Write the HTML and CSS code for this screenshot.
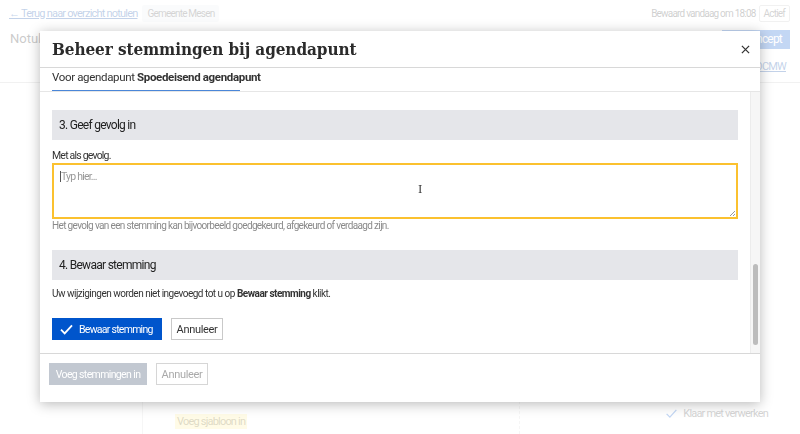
FILE: index.html
```html
<!DOCTYPE html>
<html lang="nl">
<head>
<meta charset="utf-8">
<title>Beheer stemmingen</title>
<link rel="stylesheet" href="styles.css">
</head>
<body>
<div class="page">
  <header class="topbar">
    <div class="topbar-left">
      <a class="back-link" href="#">← Terug naar overzicht notulen</a>
      <span class="pill">Gemeente Mesen</span>
    </div>
    <div class="topbar-right">
      <span class="saved">Bewaard vandaag om 18:08</span>
      <span class="pill pill-outline">Actief</span>
    </div>
  </header>
  <div class="titlebar">
    <span class="doc-title">Notulen</span>
    <span class="btn-concept">Concept</span>
  </div>
  <div class="subbar">
    <a class="ocmw-link" href="#">OCMW</a>
  </div>
  <div class="workspace">
    <aside class="sidebar"></aside>
    <main class="editor">
      <span class="template-link">Voeg sjabloon in</span>
    </main>
    <aside class="aside">
      <span class="done"><svg class="done-icon" viewBox="0 0 16 16" width="13" height="13"><path d="M2 8.5l4 4 8-9" fill="none" stroke="currentColor" stroke-width="1.6"/></svg>Klaar met verwerken</span>
    </aside>
  </div>
</div>

<div class="backdrop"></div>

<div class="modal">
  <div class="modal-header">
    <h1 class="modal-title">Beheer stemmingen bij agendapunt</h1>
    <button class="modal-close" aria-label="Sluiten"><svg viewBox="0 0 10 10" width="9" height="9"><path d="M1 1l8 8M9 1l-8 8" stroke="#333" stroke-width="1.4" fill="none"/></svg></button>
  </div>
  <div class="modal-sub">
    <span class="sub-text">Voor agendapunt <strong>Spoedeisend agendapunt</strong></span>
  </div>
  <div class="modal-body">
    <div class="body-content">
      <div class="step-bar">3. Geef gevolg in</div>
      <label class="field-label">Met als gevolg.</label>
      <div class="textarea"><span class="caret"></span><span class="placeholder">Typ hier...</span><span class="ibeam">I</span><span class="grip"></span></div>
      <p class="help">Het gevolg van een stemming kan bijvoorbeeld goedgekeurd, afgekeurd of verdaagd zijn.</p>
      <div class="step-bar step-bar-2">4. Bewaar stemming</div>
      <p class="note">Uw wijzigingen worden niet ingevoegd tot u op <strong>Bewaar stemming</strong> klikt.</p>
      <div class="actions">
        <button class="btn btn-primary"><svg class="btn-icon" viewBox="0 0 14 12" width="13" height="11"><path d="M1 6.2l4 4L13 1.5" fill="none" stroke="#fff" stroke-width="2"/></svg><span>Bewaar stemming</span></button>
        <button class="btn btn-secondary">Annuleer</button>
      </div>
    </div>
    <div class="scrolltrack"><div class="scrollthumb"></div></div>
  </div>
  <div class="modal-footer">
    <button class="btn btn-disabled">Voeg stemmingen in</button>
    <button class="btn btn-secondary btn-muted">Annuleer</button>
  </div>
</div>
</body>
</html>
```

FILE: styles.css
```css
* { box-sizing: border-box; }
html, body { margin: 0; padding: 0; }
body {
  width: 800px;
  height: 434px;
  overflow: hidden;
  background: #fff;
  font-family: Roboto, "Liberation Sans", sans-serif;
  letter-spacing: -0.05em;
  color: #333;
}

/* background page */
.page { height: 434px; display: flex; flex-direction: column; }
.topbar {
  height: 26px;
  display: flex;
  justify-content: space-between;
  align-items: center;
  padding: 0 10px 0 9px;
  font-size: 11px;
}
.topbar-left, .topbar-right { display: flex; align-items: center; gap: 10px; }
.topbar-left { gap: 5px; }
.back-link { color: #2a5fb0; text-decoration: underline; }
.pill {
  background: #eef0f2;
  color: #666;
  font-size: 10px;
  padding: 3px 5px;
  border-radius: 2px;
}
.pill-outline { background: #fff; border: 1px solid #ccc; padding: 2px 4px; }
.saved { color: #555; font-size: 10px; }
.topbar-right { gap: 3px; }
.titlebar {
  height: 24px;
  display: flex;
  justify-content: space-between;
  align-items: center;
  padding: 0 10px;
}
.doc-title { font-size: 13px; color: #444; letter-spacing: 0; }
.btn-concept {
  background: #2a6fd6;
  color: #fff;
  font-size: 12px;
  width: 68px;
  height: 19px;
  display: flex;
  align-items: center;
  justify-content: flex-end;
  padding-right: 8px;
  margin-top: 2px;
}
.subbar {
  height: 33px;
  display: flex;
  justify-content: flex-end;
  align-items: center;
  padding: 0 14px;
  border-bottom: 1px solid #ccc;
}
.ocmw-link { color: #2a5fb0; font-size: 11px; }
.workspace { flex: 1; display: flex; }
.sidebar { width: 143px; border-right: 1px solid #ddd; }
.editor { width: 377px; border-right: 1px dashed #ddd; display: flex; flex-direction: column; justify-content: flex-end; padding: 0 0 5px 32px; }
.template-link { align-self: flex-start; background: #fff1a8; color: #8a7a30; font-size: 11px; padding: 1px 2px; }
.aside { flex: 1; display: flex; flex-direction: column; justify-content: flex-end; align-items: flex-end; padding: 0 32px 14px 0; }
.done { color: #666; font-size: 11px; display: flex; align-items: center; gap: 5px; }
.done-icon { color: #2a6fd6; }

.backdrop {
  position: fixed;
  inset: 0;
  background: rgba(255, 255, 255, 0.72);
}

/* modal */
.modal {
  position: fixed;
  left: 40px;
  top: 31px;
  width: 720px;
  height: 371px;
  background: #fff;
  box-shadow: 0 2px 12px rgba(0, 0, 0, 0.28);
  display: flex;
  flex-direction: column;
}
.modal-header {
  height: 37px;
  flex: none;
  display: flex;
  align-items: center;
  justify-content: space-between;
  padding: 0 9px 0 12px;
  border-bottom: 1px solid #d8d8d8;
}
.modal-title {
  margin: 0;
  font-family: "DejaVu Serif", "Liberation Serif", serif;
  font-stretch: condensed;
  font-weight: bold;
  font-size: 17px;
  color: #2b2b2b;
  letter-spacing: -0.1px;
}
.modal-close {
  border: 0;
  background: none;
  padding: 0;
  width: 12px;
  height: 12px;
  display: flex;
  align-items: center;
  justify-content: center;
}
.modal-sub {
  height: 24px;
  flex: none;
  padding: 0 12px;
  border-bottom: 1px solid #e6e6e6;
  display: flex;
  align-items: flex-end;
}
.sub-text {
  font-size: 11.5px;
  letter-spacing: -0.03em;
  color: #333;
  padding-bottom: 7px;
  position: relative;
}
.sub-text::after {
  content: "";
  position: absolute;
  left: 0;
  bottom: 0;
  width: 188px;
  height: 1px;
  background: #4a86d8;
}
.modal-body {
  height: 262px;
  flex: none;
  display: flex;
  border-bottom: 1px solid #d8d8d8;
}
.body-content {
  flex: 1;
  padding: 18px 12px 0 12px;
  overflow: hidden;
}
.step-bar {
  height: 30px;
  background: #e5e6ea;
  display: flex;
  align-items: center;
  padding-left: 7px;
  font-size: 12px;
  letter-spacing: -0.06em;
  color: #222;
}
.field-label { display: block; font-size: 10.5px; color: #333; margin: 9px 0 1px; }
.textarea {
  height: 56px;
  border: 2px solid #fbc12f;
  position: relative;
  padding: 5px 6px;
  font-size: 10.5px;
}
.caret { display: inline-block; width: 1px; height: 11px; background: #555; vertical-align: -2px; }
.placeholder { color: #999; }
.ibeam { position: absolute; left: 364px; top: 18px; font-family: "DejaVu Serif", serif; font-size: 11px; color: #333; }
.grip {
  position: absolute;
  right: 1px;
  bottom: 1px;
  width: 5px;
  height: 5px;
  background: linear-gradient(135deg, transparent 45%, #999 45%, #999 55%, transparent 55%, transparent 75%, #999 75%, #999 85%, transparent 85%);
}
.help { margin: 1px 0 0; font-size: 10px; letter-spacing: -0.065em; color: #8a8a8a; }
.step-bar-2 { margin-top: 19px; }
.note { margin: 8px 0 0; font-size: 10px; letter-spacing: -0.05em; color: #333; }
.note strong { font-weight: bold; }
.actions { display: flex; gap: 9px; margin-top: 19px; }
.btn {
  height: 22px;
  font-family: inherit;
  font-size: 11px;
  letter-spacing: -0.03em;
  border: 1px solid #c9c9c9;
  background: #fff;
  color: #333;
  padding: 0 6px;
  display: flex;
  align-items: center;
  white-space: nowrap;
  border-radius: 0;
}
.btn-icon { flex: none; }
.btn-primary {
  background: #0055cc;
  border-color: #0055cc;
  color: #fff;
  padding: 0 6px 0 7px;
  gap: 6px;
  width: 110px;
  font-size: 10.5px;
  letter-spacing: -0.07em;
}
.btn-secondary { width: 52px; justify-content: center; }
.scrolltrack {
  width: 10px;
  flex: none;
  background: #f6f6f6;
  border-left: 1px solid #ececec;
  display: flex;
  flex-direction: column;
  justify-content: flex-end;
  padding: 0 2px 8px 2px;
}
.scrollthumb { height: 81px; background: #bcbcbc; border-radius: 3px; }
.modal-footer {
  flex: 1;
  display: flex;
  gap: 9px;
  padding: 9px 9px;
  align-items: flex-start;
}
.btn-disabled {
  background: #c2c8d1;
  border-color: #c2c8d1;
  color: #fff;
  width: 98px;
  justify-content: center;
  font-size: 10.5px;
  letter-spacing: -0.06em;
}
.btn-muted { color: #aaa; border-color: #d6d6d6; }
```
